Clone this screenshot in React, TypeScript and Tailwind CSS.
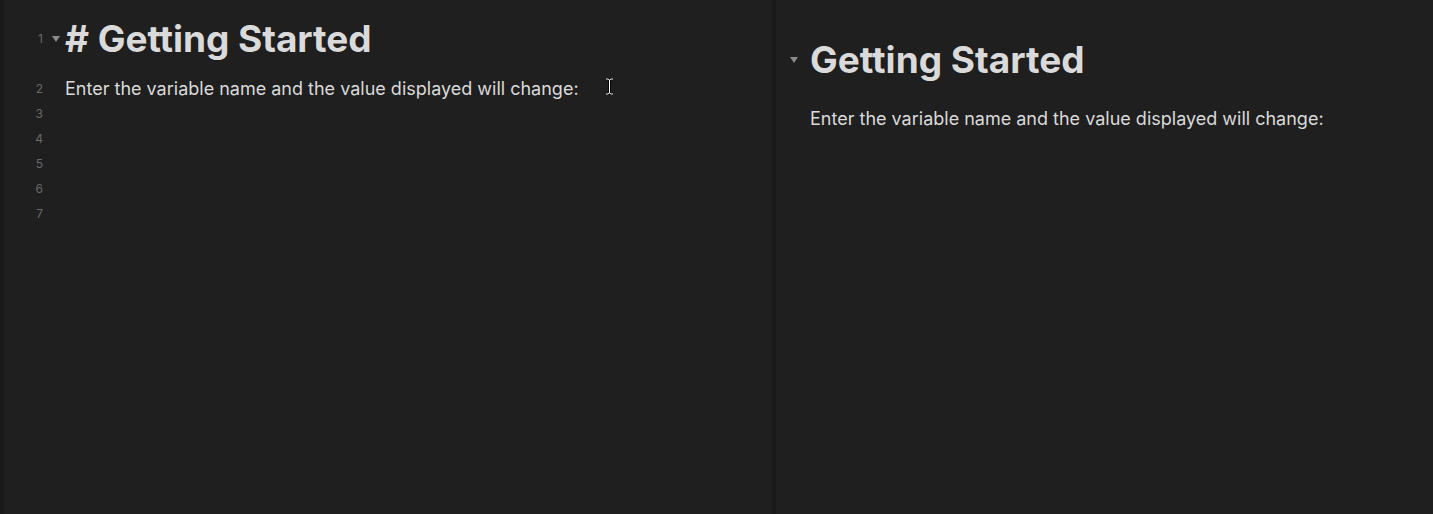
import React from "react";

function Caret({ className }: { className?: string }) {
  return (
    <svg className={className} width="8" height="6" viewBox="0 0 8 6">
      <path d="M0 0 L8 0 L4 6 Z" fill="#8a8a8a" />
    </svg>
  );
}

export default function App() {
  const text = "Enter the variable name and the value displayed will change:";
  return (
    <div
      className="flex h-[514px] w-[1433px] overflow-hidden bg-[#1e1e1e] text-[#dadada]"
      style={{ fontFamily: "Inter, 'Noto Sans', sans-serif" }}
    >
      <div className="w-[4px] shrink-0 bg-[#191919]" />
      {/* Left editor pane */}
      <div className="relative flex w-[768px] shrink-0 flex-col bg-[#1f1f1f] pt-[15px]">
        <div className="flex h-[48px] items-center">
          <div className="w-[39px] shrink-0 text-right text-[12px] text-[#6a6a6a]">1</div>
          <div className="flex w-[22px] shrink-0 justify-center pl-[3px]">
            <Caret />
          </div>
          <div className="text-[37px] font-bold leading-[48px] tracking-[-0.05px] text-[#dadada]">
            # Getting Started
          </div>
        </div>
        <div className="mt-[13px] flex h-[25px] items-center">
          <div className="w-[39px] shrink-0 text-right text-[12px] text-[#6a6a6a]">2</div>
          <div className="w-[22px] shrink-0" />
          <div className="text-[18px] leading-[25px]">{text}</div>
        </div>
        {[3, 4, 5, 6, 7].map((n) => (
          <div key={n} className="flex h-[25px] items-center">
            <div className="w-[39px] shrink-0 text-right text-[12px] text-[#6a6a6a]">{n}</div>
          </div>
        ))}
        <svg
          className="absolute left-[601px] top-[78px]"
          width="9"
          height="17"
          viewBox="0 0 9 17"
        >
          <path
            d="M1 1 H3 L4.5 2 L6 1 H8 M4.5 2 V15 M1 16 H3 L4.5 15 L6 16 H8"
            stroke="#000"
            strokeWidth="2.6"
            fill="none"
          />
          <path
            d="M1 1 H3 L4.5 2 L6 1 H8 M4.5 2 V15 M1 16 H3 L4.5 15 L6 16 H8"
            stroke="#fff"
            strokeWidth="1"
            fill="none"
          />
        </svg>
      </div>
      {/* Divider */}
      <div className="w-[4px] shrink-0 bg-[#191919]" />
      {/* Right preview pane */}
      <div className="flex flex-1 flex-col bg-[#1f1f1f] pl-[14px] pt-[36px]">
        <div className="flex h-[48px] items-center">
          <div className="flex w-[20px] shrink-0 items-center">
            <Caret />
          </div>
          <div className="text-[37px] font-bold leading-[48px]">Getting Started</div>
        </div>
        <div className="mt-[22px] pl-[20px] text-[18px] leading-[25px]">{text}</div>
      </div>
    </div>
  );
}
